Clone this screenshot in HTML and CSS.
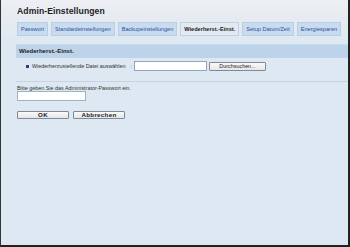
FILE: index.html
```html
<!DOCTYPE html>
<html lang="de">
<head>
    <meta charset="UTF-8">
    <title>Admin-Einstellungen</title>
    <link rel="stylesheet" href="styles.css">
</head>
<body>
    <div class="frame">
        <h1>Admin-Einstellungen</h1>

        <!-- Tabs -->
        <div class="tabs">
            <span class="tab">Passwort</span>
            <span class="tab">Standardeinstellungen</span>
            <span class="tab">Backupeinstellungen</span>
            <span class="tab active">Wiederherst.-Einst.</span>
            <span class="tab">Setup Datum/Zeit</span>
            <span class="tab">Energiesparen</span>
        </div>

        <!-- Restore section -->
        <div class="section-head">Wiederherst.-Einst.</div>
        <div class="file-row">
            <span class="bullet"></span>
            <span class="file-label">Wiederherzustellende Datei auswählen</span>
            <span class="colon">:</span>
            <span class="field file-field"></span>
            <span class="btn browse">Durchsuchen...</span>
        </div>
        <div class="divider"></div>

        <!-- Password -->
        <div class="pw">
            <p>Bitte geben Sie das Administrator-Passwort ein.</p>
            <span class="field pw-field"></span>
        </div>

        <div class="actions">
            <span class="btn action">OK</span>
            <span class="btn action">Abbrechen</span>
        </div>
    </div>
</body>
</html>
```

FILE: styles.css
```css
/* General */
html, body {
    margin: 0;
    height: 100%;
}

body {
    font-family: 'Liberation Sans', Arial, sans-serif;
    color: #222;
    box-sizing: border-box;
    border-left: 1px solid #333;
    border-right: 2px solid #222;
    border-bottom: 2px solid #222;
    background: linear-gradient(180deg, #eceff3 0px, #e6ebf1 20px, #dde8f2 45px, #dde8f2 100%);
}

.frame {
    padding: 6px 0 0 15px;
}

h1 {
    margin: 0 0 0 1px;
    font-size: 8.6px;
    font-weight: bold;
    letter-spacing: 0.1px;
    line-height: 11px;
    color: #222;
}

/* Tabs */
.tabs {
    display: flex;
    gap: 3px;
    margin: 5px 0 0 1px;
}

.tab {
    display: block;
    height: 12px;
    line-height: 12px;
    padding: 0 3px;
    font-size: 5.6px;
    color: #2e4f9e;
    background: #c8dbef;
    border: 1px solid #b9cee3;
}

.tab.active {
    background: #e2e9f0;
    color: #222;
    font-weight: bold;
    border-color: #c4d0dc;
    padding: 0 3px;
}

/* Section */
.section-head {
    margin-top: 8px;
    height: 13px;
    line-height: 13px;
    padding-left: 3px;
    font-size: 6px;
    font-weight: bold;
    background: #bcd3e9;
    border-top: 1px solid #c9dbec;
}

.file-row {
    display: flex;
    align-items: center;
    margin: 3px 0 0 10px;
    font-size: 5.4px;
    color: #333;
}

.bullet {
    width: 3px;
    height: 3px;
    background: #2c3f7a;
    margin-right: 3px;
}

.colon {
    margin: 0 2px 0 5px;
}

.field {
    display: block;
    background: #fff;
    border: 1px solid #8fa6bd;
    box-sizing: border-box;
}

.file-field {
    width: 73px;
    height: 10px;
}

.btn {
    display: block;
    box-sizing: border-box;
    text-align: center;
    background: linear-gradient(180deg, #fafafa, #e6e6e6);
    border: 1px solid #7f8a96;
    border-radius: 1px;
    color: #222;
}

.browse {
    width: 57px;
    height: 9px;
    line-height: 7px;
    margin-left: 2px;
    font-size: 5.4px;
}

.divider {
    margin-top: 10px;
    height: 1px;
    background: #c6d4e1;
}

/* Password */
.pw {
    margin: 3px 0 0 1px;
    font-size: 5.4px;
    color: #333;
}

.pw p {
    margin: 0;
    line-height: 6px;
}

.pw-field {
    width: 69px;
    height: 10px;
    margin-top: 0;
    border-color: #9fb3c7;
}

.actions {
    display: flex;
    gap: 4px;
    margin: 10px 0 0 1px;
}

.action {
    width: 52px;
    height: 8px;
    line-height: 6px;
    font-size: 6.2px;
    font-weight: bold;
    letter-spacing: 0.3px;
}
```
